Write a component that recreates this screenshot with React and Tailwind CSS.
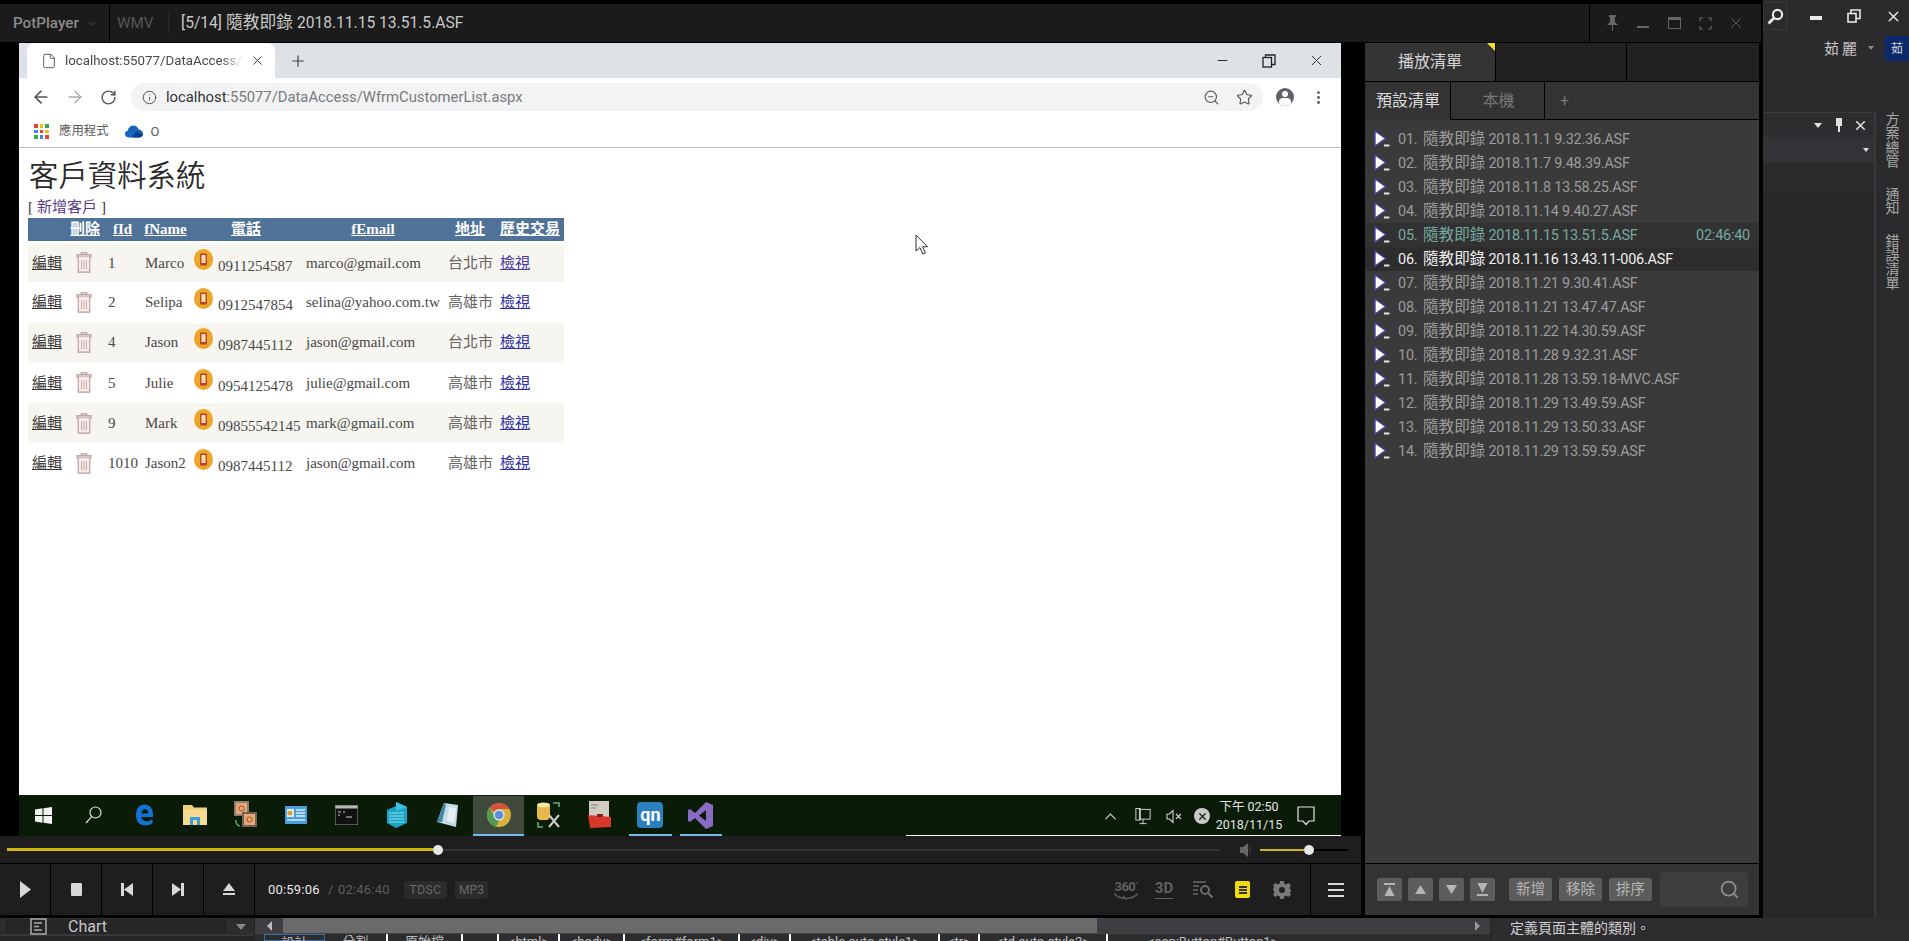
import React from "react";
import { ArrowLeft, ArrowRight, RotateCw, Info, Star, MoreVertical, X, Plus, File, Minus, ChevronDown, ChevronUp, Search, ZoomOut } from "lucide-react";

const customers = [
  ["1", "Marco", "0911254587", "marco@gmail.com", "台北市"],
  ["2", "Selipa", "0912547854", "selina@yahoo.com.tw", "高雄市"],
  ["4", "Jason", "0987445112", "jason@gmail.com", "台北市"],
  ["5", "Julie", "0954125478", "julie@gmail.com", "高雄市"],
  ["9", "Mark", "09855542145", "mark@gmail.com", "高雄市"],
  ["1010", "Jason2", "0987445112", "jason@gmail.com", "高雄市"],
];

const playlist = [
  ["01.", "2018.11.1 9.32.36.ASF"],
  ["02.", "2018.11.7 9.48.39.ASF"],
  ["03.", "2018.11.8 13.58.25.ASF"],
  ["04.", "2018.11.14 9.40.27.ASF"],
  ["05.", "2018.11.15 13.51.5.ASF"],
  ["06.", "2018.11.16 13.43.11-006.ASF"],
  ["07.", "2018.11.21 9.30.41.ASF"],
  ["08.", "2018.11.21 13.47.47.ASF"],
  ["09.", "2018.11.22 14.30.59.ASF"],
  ["10.", "2018.11.28 9.32.31.ASF"],
  ["11.", "2018.11.28 13.59.18-MVC.ASF"],
  ["12.", "2018.11.29 13.49.59.ASF"],
  ["13.", "2018.11.29 13.50.33.ASF"],
  ["14.", "2018.11.29 13.59.59.ASF"],
];

function TrashIcon() {
  return (
    <svg width="16" height="21" viewBox="0 0 17 23" fill="none" stroke="#b89a98" strokeWidth="1.2">
      <path d="M5.5 3V1h6v2" />
      <rect x="0.8" y="3" width="15.4" height="2.6" fill="#e8dcda" />
      <path d="M2.2 5.6V22h12.6V5.6" fill="#f6eeec" />
      <path d="M5.8 9v10M8.5 9v10M11.2 9v10" stroke="#cfaeab" />
    </svg>
  );
}

function PhoneIcon() {
  return (
    <svg width="19" height="21" viewBox="0 0 19 21">
      <ellipse cx="9.5" cy="10.5" rx="9.5" ry="10.5" fill="#eda52a" />
      <rect x="6" y="4.5" width="7" height="12" rx="1" fill="#b5452a" />
      <rect x="7.4" y="6" width="4.2" height="8" fill="#f2d9b0" />
    </svg>
  );
}

function PlayItemIcon() {
  return (
    <svg width="16" height="18" viewBox="0 0 16 18">
      <path d="M1 1L11.5 8.5L1 16Z" fill="#ffffff" stroke="#4a46a8" strokeWidth="1.4" />
      <rect x="10" y="14.5" width="5.5" height="2" fill="#e0e0e0" />
    </svg>
  );
}

function AppsGrid() {
  const colors = ["#ea4335", "#fbbc05", "#34a853", "#4285f4", "#ea4335", "#fbbc05", "#34a853", "#4285f4", "#ea4335"];
  return (
    <div className="grid grid-cols-3 gap-[2px] w-[15px] h-[15px]">
      {colors.map((c, i) => (
        <div key={i} className="w-[3.6px] h-[3.6px]" style={{ backgroundColor: c }} />
      ))}
    </div>
  );
}

function ChromeLogo() {
  return (
    <svg width="24" height="24" viewBox="0 0 24 24">
      <circle cx="12" cy="12" r="12" fill="#d8b13a" />
      <path d="M12 0A12 12 0 0 1 22.4 6H12A6 6 0 0 0 6.8 9L2.6 4.6A12 12 0 0 1 12 0Z" fill="#d5513f" />
      <path d="M2.6 4.6L7.8 14A6 6 0 0 0 12 18L9 23.6A12 12 0 0 1 2.6 4.6Z" fill="#4f9a55" />
      <circle cx="12" cy="12" r="5.6" fill="#e6e6e6" />
      <circle cx="12" cy="12" r="4.3" fill="#5b8fe0" />
    </svg>
  );
}

function TaskIcon({ children, active, under }) {
  return (
    <div className={active ? "w-[50.6px] h-full flex flex-col bg-[#3f4a3c] shrink-0" : "w-[50.6px] h-full flex flex-col shrink-0"}>
      <div className="flex-1 flex items-center justify-center">{children}</div>
      <div className={under ? "h-[2px] mx-[4px] bg-[#76b9ed]" : active ? "h-[2px] bg-[#76b9ed]" : "h-[2px]"} />
    </div>
  );
}

function Taskbar() {
  return (
    <div className="h-[41px] bg-[#0a1c08] flex items-stretch relative border-t border-[#0c240a]">
      <div className="flex -ml-[1px] h-full">
        <TaskIcon>
          <svg width="17" height="17" viewBox="0 0 17 17" fill="#f2f2f2"><path d="M0 2.5L7.5 1.3V8H0ZM8.5 1.2L17 0V8H8.5ZM0 9H7.5V15.7L0 14.5ZM8.5 9H17V17L8.5 15.8Z" /></svg>
        </TaskIcon>
        <TaskIcon>
          <svg width="17" height="18" viewBox="0 0 17 18" fill="none" stroke="#e0e0e0" strokeWidth="1.2"><circle cx="10.5" cy="6.5" r="5.5" /><path d="M6.5 10.8L1 17" /></svg>
        </TaskIcon>
        <TaskIcon>
          <svg width="21" height="24" viewBox="0 0 21 24" fill="none"><path d="M19 11.5C19 5 15.5 1.5 10.5 1.5C5 1.5 2 6.5 2 12C2 18.5 6 22.5 11.5 22.5C14.5 22.5 17 21.5 18.5 20V16C16.5 17.5 14.5 18.3 12.5 18.3C9.5 18.3 7.5 16.5 7.3 14H19ZM7.4 10.5C7.7 8 9 6.3 11 6.3C13 6.3 14.2 8 14.3 10.5Z" fill="#1173d4" fillRule="evenodd" /></svg>
        </TaskIcon>
        <TaskIcon>
          <svg width="24" height="22" viewBox="0 0 24 22"><path d="M0 1H9L11 3.5H24V21H0Z" fill="#f0cf7a" /><rect x="0" y="6" width="24" height="15" fill="#f5da90" /><path d="M7 13H17V21H14V16H10V21H7Z" fill="#3a9ed8" /></svg>
        </TaskIcon>
        <TaskIcon>
          <svg width="25" height="28" viewBox="0 0 25 28"><rect x="1" y="0" width="15" height="15" fill="#8b8070" /><rect x="3" y="2" width="11" height="11" fill="#e5a773" /><circle cx="8.5" cy="7.5" r="2.6" fill="none" stroke="#b44a20" /><rect x="9" y="11" width="15" height="15" fill="#6d6457" /><rect x="11" y="13" width="11" height="11" fill="#e5a773" /><circle cx="16.5" cy="18.5" r="2.6" fill="none" stroke="#b44a20" /><path d="M3 19A5 5 0 0 0 7 25" fill="none" stroke="#4caf50" strokeWidth="1.6" /></svg>
        </TaskIcon>
        <TaskIcon>
          <svg width="22" height="18" viewBox="0 0 22 18"><rect width="22" height="18" fill="#4a9ee0" /><rect x="2" y="3" width="7" height="8" fill="#e8f0f5" /><circle cx="5" cy="7" r="2.5" fill="#e09a30" /><path d="M11 4H20M11 7H20M11 10H20M2 14H20" stroke="#d6ecfa" strokeWidth="1.4" /></svg>
        </TaskIcon>
        <TaskIcon>
          <svg width="23" height="20" viewBox="0 0 23 20"><rect width="23" height="20" fill="#111" stroke="#999" /><rect x="0.5" y="0.5" width="22" height="3" fill="#b5b5b5" /><path d="M3 7H6M8 7H10M3 10H5M11 12H17" stroke="#d0d0d0" strokeWidth="1.2" /></svg>
        </TaskIcon>
        <TaskIcon>
          <svg width="20" height="26" viewBox="0 0 20 26"><path d="M9 0L20 5V21L9 26L0 21V8L9 4Z" fill="#18a4c9" /><path d="M2 11H17M2 14H17M2 17H17M2 20H17" stroke="#a5e4f2" strokeWidth="0.9" /><path d="M9 0L20 5L9 9Z" fill="#3bc4e4" /></svg>
        </TaskIcon>
        <TaskIcon>
          <svg width="22" height="26" viewBox="0 0 22 26"><path d="M7 1L21 3L19 25L0 20Z" fill="#c3dce6" /><path d="M7 1L9 3L5 20L0 20Z" fill="#3f88a6" /><path d="M12 5L19 6L17 21L10 19Z" fill="#e7f1f5" /></svg>
        </TaskIcon>
        <TaskIcon active>
          <ChromeLogo />
        </TaskIcon>
        <TaskIcon>
          <svg width="26" height="28" viewBox="0 0 26 28"><rect x="1" y="2" width="13" height="17" rx="4" fill="#e7b84a" /><ellipse cx="7.5" cy="4" rx="6.5" ry="2.4" fill="#f5e6a8" /><path d="M17 2H23V6M2 21V26H7" fill="none" stroke="#5db075" strokeWidth="1.6" /><path d="M13 26L23 14M23 26L13 14" stroke="#ccc" strokeWidth="2" /></svg>
        </TaskIcon>
        <TaskIcon>
          <svg width="23" height="28" viewBox="0 0 23 28"><rect x="1" y="0" width="20" height="18" fill="#d0cbc4" /><path d="M3 4H10M3 7H8" stroke="#88807a" /><path d="M0 14L23 16V26L2 27Z" fill="#d8382c" /><rect x="9" y="13" width="6" height="3" fill="#8b1f15" /></svg>
        </TaskIcon>
        <TaskIcon under>
          <div className="w-[26px] h-[26px] rounded-[4px] bg-[#2a7fc0] flex items-center justify-center text-white font-bold text-[18px] leading-none font-['Roboto',sans-serif]">qn</div>
        </TaskIcon>
        <TaskIcon under>
          <svg width="26" height="27" viewBox="0 0 26 27"><path d="M18 0L25 3V24L18 27L7 16L2 20L0 19V8L2 7L7 11ZM18 8L11 13.5L18 19Z" fill="#8a6bc4" fillRule="evenodd" /></svg>
        </TaskIcon>
      </div>
      <div className="ml-auto flex items-center h-full text-[#dcdcdc]">
        <ChevronUp size={19} strokeWidth={1.3} className="mr-[15px]" />
        <svg width="16" height="19" viewBox="0 0 18 20" fill="none" stroke="#cfcfcf" strokeWidth="1.1" className="mr-[15px]"><rect x="5" y="2" width="12" height="11" /><rect x="1" y="1" width="5" height="13" /><path d="M9 13V18M5 18H13" /></svg>
        <svg width="16" height="15" viewBox="0 0 16 15" fill="none" stroke="#cfcfcf" strokeWidth="1.1" className="mr-[12px]"><path d="M1 5H3.5L7 1.5V13.5L3.5 10H1Z" /><path d="M10 5L15 10M15 5L10 10" /></svg>
        <div className="w-[16px] h-[16px] rounded-full bg-[#c9c9c9] flex items-center justify-center mr-[6px]"><X size={11} strokeWidth={3} className="text-[#222]" /></div>
        <div className="w-[66px] flex flex-col items-center text-[12.5px] leading-[18px] text-[#e4e4e4] font-['Roboto','Noto_Sans_CJK_TC',sans-serif]">
          <span>下午 02:50</span>
          <span>2018/11/15</span>
        </div>
        <svg width="18" height="20" viewBox="0 0 18 20" fill="none" stroke="#e4e4e4" strokeWidth="1.2" className="ml-[15px] mr-[26px]"><path d="M1 1H17V15H12L9 18.5L6 15H1Z" /></svg>
      </div>
      <div className="absolute right-0 bottom-0 w-[435px] h-[1px] bg-white" />
    </div>
  );
}

function ChromeWindow() {
  return (
    <div className="w-[1322px] h-[752px] bg-white flex flex-col relative overflow-hidden font-['Roboto','Noto_Sans_CJK_TC',sans-serif]">
      <div className="h-[35px] bg-[#dee1e6] flex items-end shrink-0">
        <div className="ml-[8px] w-[248px] h-[35px] bg-white rounded-t-[8px] flex items-center pl-[14px] pr-[10px]">
          <File size={16} strokeWidth={1.4} className="text-[#555] shrink-0" />
          <div className="ml-[8px] w-[178px] overflow-hidden whitespace-nowrap text-[13.3px] text-[#4a4a4a] [mask-image:linear-gradient(to_right,black_88%,transparent)]">localhost:55077/DataAccess/WfrmCustomerList.aspx</div>
          <X size={15} strokeWidth={1.6} className="ml-auto text-[#444]" />
        </div>
        <div className="self-center ml-[14px] text-[#444]"><Plus size={18} strokeWidth={1.6} /></div>
        <div className="ml-auto self-center flex items-center text-[#222] pr-[16px] gap-[32px]">
          <Minus size={15} strokeWidth={1.5} />
          <svg width="14" height="14" viewBox="0 0 14 14" fill="none" stroke="#222" strokeWidth="1.3"><rect x="1" y="3.5" width="8.5" height="9.5" /><path d="M3.5 3.5V1H13V10.5H9.5" /></svg>
          <X size={17} strokeWidth={1.3} />
        </div>
      </div>
      <div className="h-[38px] flex items-center pl-[12px] pr-[13px] shrink-0">
        <ArrowLeft size={20} strokeWidth={2} className="text-[#555] shrink-0" />
        <ArrowRight size={20} strokeWidth={1.6} className="text-[#aaa] ml-[14px] shrink-0" />
        <RotateCw size={17} strokeWidth={2} className="text-[#555] ml-[15px] shrink-0" />
        <div className="ml-[14px] w-[1132px] h-[28px] rounded-full bg-[#f1f3f4] flex items-center pl-[11px] pr-[10px] shrink-0">
          <Info size={15} strokeWidth={1.6} className="text-[#555]" />
          <div className="ml-[9px] text-[14.8px] whitespace-nowrap text-[#7a7a7a]"><span className="text-[#333]">localhost</span>:55077/DataAccess/WfrmCustomerList.aspx</div>
          <ZoomOut size={17} strokeWidth={1.6} className="ml-auto text-[#555]" />
          <Star size={17} strokeWidth={1.6} className="ml-[16px] text-[#555]" />
        </div>
        <div className="ml-[13px] w-[18px] h-[18px] rounded-full bg-[#5f6368] relative overflow-hidden shrink-0">
          <div className="absolute left-[6px] top-[3px] w-[6px] h-[6px] rounded-full bg-white" />
          <div className="absolute left-[3px] top-[10px] w-[12px] h-[8px] rounded-full bg-white" />
        </div>
        <MoreVertical size={17} strokeWidth={2} className="ml-[16px] text-[#555] shrink-0" />
      </div>
      <div className="h-[32px] border-b border-[#bdbdbd] flex items-center pl-[15px] shrink-0">
        <AppsGrid />
        <span className="ml-[10px] text-[12.4px] text-[#5c5c5c]">應用程式</span>
        <svg width="18" height="13" viewBox="0 0 18 13" className="ml-[16px]"><path d="M4 12.5C1.5 12.5 0 11 0 9C0 7.3 1 6 2.7 5.8C3.3 2.5 5.6 0.5 8.5 0.5C10.8 0.5 12.7 1.9 13.5 4.2C15.8 4.4 18 6.2 18 8.7C18 11 16 12.5 14 12.5Z" fill="#1565c0" /><path d="M7 12.5L11.5 6L18 9.5C17.5 11.5 16 12.5 14 12.5Z" fill="#0a3f8f" /></svg>
        <span className="ml-[8px] text-[13px] text-[#5c5c5c]">O</span>
      </div>
      <div className="flex-1 flex flex-col pl-[9px] pt-[6px] font-['Liberation_Serif','Noto_Sans_CJK_TC',serif]">
        <h1 className="text-[29.4px] leading-[38px] text-[#2a2a2a] font-['Noto_Sans_CJK_TC',sans-serif] [font-weight:350] ml-[1px]">客戶資料系統</h1>
        <div className="h-[21px] mt-[5px] flex items-center text-[15px] text-[#333]">[ <a className="mx-[4px] text-[#5a3a8c]">新增客戶</a> ]</div>
        <table className="table-fixed w-[536px] border-collapse text-[15px] text-[#484848]">
          <colgroup>
            <col className="w-[38px]" /><col className="w-[38px]" /><col className="w-[37px]" /><col className="w-[49px]" /><col className="w-[112px]" /><col className="w-[142px]" /><col className="w-[52px]" /><col className="w-[68px]" />
          </colgroup>
          <thead>
            <tr className="h-[24px] bg-[#507299] text-white font-bold underline text-center">
              <th></th><th>刪除</th><th>fId</th><th>fName</th><th>電話</th><th>fEmail</th><th>地址</th><th className="whitespace-nowrap">歷史交易</th>
            </tr>
          </thead>
          <tbody>
            {customers.map((c, i) => (
              <tr key={c[0]} className={i % 2 === 0 ? "h-[40.25px] bg-[#f6f5ef]" : "h-[40.25px] bg-white"}>
                <td className={i === 0 ? "pl-[4px] underline text-[#3a3a3a] border-t-[3px] border-white" : "pl-[4px] underline text-[#3a3a3a]"}>編輯</td>
                <td className={i === 0 ? "pl-[10px] border-t-[3px] border-white" : "pl-[10px]"}><TrashIcon /></td>
                <td className={i === 0 ? "pl-[4px] border-t-[3px] border-white" : "pl-[4px]"}>{c[0]}</td>
                <td className={i === 0 ? "pl-[4px] border-t-[3px] border-white" : "pl-[4px]"}>{c[1]}</td>
                <td className={i === 0 ? "pl-[4px] whitespace-nowrap border-t-[3px] border-white" : "pl-[4px] whitespace-nowrap"}>
                  <div className="flex items-start">
                    <PhoneIcon />
                    <span className="ml-[5px] mt-[6px]">{c[2]}</span>
                  </div>
                </td>
                <td className={i === 0 ? "pl-[4px] whitespace-nowrap border-t-[3px] border-white" : "pl-[4px] whitespace-nowrap"}>{c[3]}</td>
                <td className={i === 0 ? "pl-[4px] whitespace-nowrap text-[#666] border-t-[3px] border-white" : "pl-[4px] whitespace-nowrap text-[#666]"}>{c[4]}</td>
                <td className={i === 0 ? "pl-[4px] underline text-[#4b3a9c] border-t-[3px] border-white" : "pl-[4px] underline text-[#2f2fa8]"}>檢視</td>
              </tr>
            ))}
          </tbody>
        </table>
      </div>
      <svg width="14" height="22" viewBox="0 0 14 22" className="absolute left-[896px] top-[191px]" fill="#fff" stroke="#333" strokeWidth="1"><path d="M1 1V17L5 13.5L7.8 20L10.5 19L7.6 12.8H12.5Z" /></svg>
    </div>
  );
}

function CtrlCell({ children }) {
  return <div className="w-[51px] h-full border-r border-black flex items-center justify-center shrink-0">{children}</div>;
}

function SmallSquareBtn({ children }) {
  return <div className="w-[25px] h-[23px] rounded-[2px] bg-[#5c5c5c] flex items-center justify-center">{children}</div>;
}

function TextBtn({ children }) {
  return <div className="w-[43px] h-[23px] rounded-[2px] bg-[#5c5c5c] flex items-center justify-center text-[14.5px] text-[#b5b5b5]">{children}</div>;
}

function Playlist() {
  return (
    <div className="w-[394px] h-full flex flex-col bg-[#3a3a3a] font-['Roboto','Noto_Sans_CJK_TC',sans-serif] shrink-0">
      <div className="h-[39px] flex bg-[#212121] border-b border-black shrink-0">
        <div className="w-[130px] bg-[#343434] relative flex items-center pl-[33px] text-[16px] text-[#d4d4d4]">
          播放清單
          <div className="absolute right-0 top-0 w-0 h-0 border-t-[8px] border-t-[#f5e027] border-l-[8px] border-l-transparent" />
        </div>
        <div className="w-[1px] bg-black" />
        <div className="w-[131px] border-r border-black" />
      </div>
      <div className="h-[38px] flex bg-[#333333] shrink-0">
        <div className="w-[86px] border-r border-black flex items-center pl-[11px] text-[16px] text-[#dcdcdc]">預設清單</div>
        <div className="w-[94px] border-r border-b border-black flex items-center justify-center text-[16px] text-[#777] pl-[2px]">本機</div>
        <div className="flex-1 border-b border-black flex items-center pl-[15px] text-[16px] text-[#777]">+</div>
      </div>
      <div className="flex-1 pt-[7px]">
        {playlist.map((p, i) => (
          <div
            key={p[0]}
            className={
              i === 4
                ? "h-[24px] flex items-center pl-[9px] pr-[9px] bg-[#323232] text-[#76a8a2]"
                : i === 5
                ? "h-[24px] flex items-center pl-[9px] pr-[9px] bg-[#2d2d2d] text-[#efefef]"
                : "h-[24px] flex items-center pl-[9px] pr-[9px] text-[#9c9c9c]"
            }
          >
            <PlayItemIcon />
            <span className="ml-[8px] mt-[2px] text-[14.4px] tracking-[-0.2px] whitespace-nowrap w-[24px]">{p[0]}</span>
            <span className="mt-[2px] text-[15.6px] whitespace-nowrap ml-[1px]">隨教即錄</span>
            <span className="ml-[3px] mt-[2px] text-[14.4px] tracking-[-0.2px] whitespace-nowrap">{p[1]}</span>
            {i === 4 && <span className="ml-auto mt-[2px] text-[14.4px] tracking-[-0.2px]">02:46:40</span>}
          </div>
        ))}
      </div>
      <div className="h-[52px] bg-[#333333] border-t border-black flex items-center pl-[12px] shrink-0">
        <div className="flex gap-[6px]">
          <SmallSquareBtn><svg width="11" height="13" viewBox="0 0 11 13" fill="#b5b5b5"><rect y="0" width="11" height="2" /><path d="M5.5 3L10.5 13H0.5Z" /></svg></SmallSquareBtn>
          <SmallSquareBtn><svg width="11" height="9" viewBox="0 0 11 9" fill="#b5b5b5"><path d="M5.5 0L11 9H0Z" /></svg></SmallSquareBtn>
          <SmallSquareBtn><svg width="11" height="9" viewBox="0 0 11 9" fill="#b5b5b5"><path d="M0 0H11L5.5 9Z" /></svg></SmallSquareBtn>
          <SmallSquareBtn><svg width="11" height="13" viewBox="0 0 11 13" fill="#b5b5b5"><path d="M0.5 0H10.5L5.5 10Z" /><rect y="11" width="11" height="2" /></svg></SmallSquareBtn>
        </div>
        <div className="ml-[14px] flex gap-[7px]">
          <TextBtn>新增</TextBtn>
          <TextBtn>移除</TextBtn>
          <TextBtn>排序</TextBtn>
        </div>
        <div className="ml-[8px] w-[88px] h-[35px] rounded-[3px] bg-[#3d3d3d] flex items-center justify-end pr-[8px]">
          <Search size={21} strokeWidth={2} className="text-[#8d8d8d]" />
        </div>
      </div>
    </div>
  );
}

function PlayerLeft() {
  return (
    <div className="w-[1361px] h-full flex flex-col font-['Roboto','Noto_Sans_CJK_TC',sans-serif] shrink-0">
      <div className="flex-1 pl-[19px] flex flex-col bg-black">
        <ChromeWindow />
        <div className="w-[1322px]"><Taskbar /></div>
      </div>
      <div className="h-[27px] bg-[#1e1e1e] flex items-center pl-[7px] shrink-0">
        <div className="w-[426px] h-[3px] bg-[#d6b711]" />
        <div className="w-[10px] h-[10px] rounded-full bg-[#e8e8e8]" />
        <div className="w-[777px] h-[2px] bg-[#333]" />
        <svg width="14" height="14" viewBox="0 0 14 14" className="ml-[19px]" fill="#666"><path d="M1 4H4L9 0V14L4 10H1Z" /><path d="M11 3V11" stroke="#444" /></svg>
        <div className="ml-[7px] w-[44px] h-[2px] bg-[#d6b711]" />
        <div className="w-[10px] h-[10px] rounded-full bg-[#e8e8e8]" />
        <div className="w-[34px] h-[2px] bg-black" />
      </div>
      <div className="h-[52px] bg-[#1e1e1e] border-t border-black flex items-center shrink-0">
        <CtrlCell><svg width="11" height="17" viewBox="0 0 11 17" fill="#d8d8d8"><path d="M0 0L11 8.5L0 17Z" /></svg></CtrlCell>
        <CtrlCell><div className="w-[11px] h-[13px] rounded-[1px] bg-[#d8d8d8]" /></CtrlCell>
        <CtrlCell><svg width="12" height="13" viewBox="0 0 12 13" fill="#d8d8d8"><rect width="3" height="13" /><path d="M12 0V13L3 6.5Z" /></svg></CtrlCell>
        <CtrlCell><svg width="12" height="13" viewBox="0 0 12 13" fill="#d8d8d8"><rect x="9" width="3" height="13" /><path d="M0 0V13L9 6.5Z" /></svg></CtrlCell>
        <CtrlCell><svg width="12" height="13" viewBox="0 0 12 13" fill="#d8d8d8"><path d="M6 0L12 8H0Z" /><rect y="10" width="12" height="2" /></svg></CtrlCell>
        <span className="ml-[13px] w-[52px] text-[13px] tracking-[0.2px] text-[#e8e8e8] whitespace-nowrap">00:59:06</span>
        <span className="ml-[8px] w-[10px] text-[13px] text-[#5f5f5f]">/</span>
        <span className="w-[52px] text-[13px] tracking-[0.2px] text-[#5f5f5f] whitespace-nowrap">02:46:40</span>
        <div className="ml-[14px] w-[43px] h-[18px] bg-[#2b2b2b] rounded-[2px] flex items-center justify-center text-[12px] text-[#6a6a6a] tracking-[0.5px]">TDSC</div>
        <div className="ml-[8px] w-[33px] h-[18px] bg-[#2b2b2b] rounded-[2px] flex items-center justify-center text-[12px] text-[#6a6a6a]">MP3</div>
        <div className="ml-auto flex items-center h-full text-[#606060]">
          <div className="w-[26px] flex flex-col items-center leading-none">
            <span className="text-[13px] font-bold leading-[13px] tracking-[-0.5px]">360<sup className="text-[7px]">°</sup></span>
            <svg width="26" height="7" viewBox="0 0 26 7" fill="none" stroke="#606060" strokeWidth="1.2"><path d="M1 0.5C5 5 9 5.5 13 5.5C17 5.5 21 5 25 0.5" /><path d="M10 3L13 6.5" /></svg>
          </div>
          <div className="ml-[16px] w-[18px] flex flex-col items-center">
            <span className="text-[15px] font-bold leading-[16px]">3D</span>
            <div className="w-[18px] h-[1px] bg-[#606060] mt-[2px]" />
          </div>
          <svg width="22" height="17" viewBox="0 0 22 17" fill="none" stroke="#6b6b6b" strokeWidth="1.3" className="ml-[19px]"><path d="M1 1H14M1 5H7M1 9H6M1 13H6" /><circle cx="13" cy="9" r="4" strokeWidth="2" /><path d="M16 12L20.5 16.5" strokeWidth="2.2" /></svg>
          <div className="ml-[21px] w-[15px] h-[17px] rounded-[2px] bg-[#f1dc0b] flex flex-col items-center justify-center gap-[1px]">
            <div className="w-[8px] h-[2px] bg-[#333]" /><div className="w-[8px] h-[2px] bg-[#333]" /><div className="w-[8px] h-[2px] bg-[#333]" />
          </div>
          <svg width="18" height="18" viewBox="0 0 18 18" className="ml-[23px]" fill="#7a7a7a"><path d="M7.2 0H10.8L11.3 2.5L13.4 3.4L15.5 2L18 4.5L16.6 6.6L17.5 8.7L18 9V9.3L17.5 11.3L16.6 11.4L18 13.5L15.5 16L13.4 14.6L11.3 15.5L10.8 18H7.2L6.7 15.5L4.6 14.6L2.5 16L0 13.5L1.4 11.4L0.5 9.3L0 9L0.5 6.7L1.4 6.6L0 4.5L2.5 2L4.6 3.4L6.7 2.5Z" /><circle cx="9" cy="9" r="3" fill="#1e1e1e" /></svg>
          <div className="ml-[19px] w-[51px] h-full border-l border-black flex items-center justify-center">
            <div className="w-[16px] flex flex-col gap-[4px]"><div className="h-[2px] bg-[#d8d8d8]" /><div className="h-[2px] bg-[#d8d8d8]" /><div className="h-[2px] bg-[#d8d8d8]" /></div>
          </div>
        </div>
      </div>
    </div>
  );
}

function TitleBar() {
  return (
    <div className="h-[38px] bg-[#1b1b1b] flex items-center font-['Roboto','Noto_Sans_CJK_TC',sans-serif] shrink-0 w-[1761px]">
      <div className="w-[110px] h-full border-r border-black flex items-center pl-[13px] text-[15.2px] font-medium text-[#8a8a8a] shrink-0">
        PotPlayer
        <ChevronDown size={11} strokeWidth={1.5} className="ml-[8px] text-[#666]" />
      </div>
      <span className="ml-[7px] w-[52px] text-[15.2px] text-[#565656] border-r border-[#2a2a2a]">WMV</span>
      <div className="ml-[12px] whitespace-nowrap text-[#c8c8c8] text-[15.6px]">[5/14] <span className="text-[16.8px]">隨教即錄</span> 2018.11.15 13.51.5.ASF</div>
      <div className="ml-auto w-[172px] h-full border-l border-black flex items-center text-[#5f5f5f]">
        <svg width="13" height="16" viewBox="0 0 13 16" fill="#666" className="ml-[16px]"><path d="M3 0H10V2H9V7L12 10H1L4 7V2H3ZM6 10H7V16H6Z" /></svg>
        <div className="ml-[18px] w-[12px] h-[2px] mt-[8px] bg-[#666]" />
        <div className="ml-[19px] w-[13px] h-[12px] border border-[#666] border-t-[3px]" />
        <svg width="13" height="13" viewBox="0 0 13 13" fill="none" stroke="#666" strokeWidth="1.2" className="ml-[18px]"><path d="M1 4V1H4M9 1H12V4M12 9V12H9M4 12H1V9" /></svg>
        <X size={18} strokeWidth={1.1} className="ml-[15px] text-[#6a6a6a]" />
      </div>
    </div>
  );
}

function IdeRight() {
  return (
    <div className="w-[146px] h-full bg-[#2b2b2e] flex flex-col font-['Noto_Sans_CJK_TC',sans-serif] shrink-0">
      <div className="h-[32px] flex items-center shrink-0">
        <div className="w-[24px] h-[28px] border border-[#3a3a3e] flex items-center justify-center">
          <svg width="17" height="17" viewBox="0 0 17 17" fill="none" stroke="#e8e8e8" strokeWidth="2.2"><circle cx="10.5" cy="6.5" r="4.6" /><path d="M7 10L1.5 15.5" strokeWidth="2.8" /></svg>
        </div>
        <div className="ml-[23px] w-[12px] h-[4px] bg-[#e8e8e8] mt-[4px]" />
        <svg width="14" height="14" viewBox="0 0 14 14" fill="none" stroke="#e8e8e8" strokeWidth="1.6" className="ml-[25px]"><rect x="1" y="4.5" width="8" height="8.5" /><path d="M4 4.5V1H13V9.5H9" /></svg>
        <X size={17} strokeWidth={2} className="ml-[24px] text-[#e8e8e8]" />
      </div>
      <div className="h-[32px] flex items-center justify-end shrink-0">
        <span className="text-[15px] tracking-[3px] text-[#c4c4c4]">茹麗</span>
        <div className="ml-[8px] w-0 h-0 border-l-[3px] border-r-[3px] border-t-[4px] border-l-transparent border-r-transparent border-t-[#888]" />
        <div className="ml-[11px] w-[24px] h-[25px] bg-[#0b2a6b] text-[12px] text-[#d6d6d6] flex items-center justify-center">茹</div>
      </div>
      <div className="flex flex-1 mt-[48px] min-h-0">
        <div className="w-[113px] flex flex-col border-t border-r-2 border-[#3a3a3e]">
          <div className="h-[24px] bg-[#2d2d30] flex items-center justify-end pr-[6px] text-[#dcdcdc] shrink-0">
            <div className="w-0 h-0 border-l-[4px] border-r-[4px] border-t-[5px] border-l-transparent border-r-transparent border-t-[#e0e0e0]" />
            <svg width="8" height="14" viewBox="0 0 8 14" fill="#e0e0e0" className="ml-[13px]"><path d="M1 0H7V8H5V14H3V8H1Z" /></svg>
            <X size={15} strokeWidth={2.6} className="ml-[10px]" />
          </div>
          <div className="h-[26px] bg-[#333337] flex items-center justify-end pr-[5px] shrink-0">
            <div className="w-0 h-0 border-l-[3px] border-r-[3px] border-t-[4px] border-l-transparent border-r-transparent border-t-[#ddd]" />
          </div>
          <div className="h-[30px] bg-[#2b2b2e] shrink-0" />
          <div className="flex-1 bg-[#28282b]" />
        </div>
        <div className="flex-1 flex flex-col items-center text-[14px] text-[#a8a8a8] leading-[14px]">
          <span className="[writing-mode:vertical-rl]">方案總管</span>
          <span className="[writing-mode:vertical-rl] mt-[19px]">通知</span>
          <span className="[writing-mode:vertical-rl] mt-[19px]">錯誤清單</span>
        </div>
      </div>
    </div>
  );
}

export default function App() {
  return (
    <div className="w-[1909px] h-[941px] overflow-hidden flex flex-col bg-[#2d2d30]">
      <div className="h-[918px] flex shrink-0">
        <div className="w-[1763px] h-full bg-black flex flex-col pt-[4px] pb-[3px] shrink-0">
          <TitleBar />
          <div className="flex flex-1 mt-[1px] min-h-0">
            <PlayerLeft />
            <div className="w-[4px] shrink-0" />
            <Playlist />
          </div>
        </div>
        <IdeRight />
      </div>
      <div className="h-[23px] flex font-['Roboto','Noto_Sans_CJK_TC',sans-serif] shrink-0">
        <div className="w-[255px] flex flex-col border-r border-[#222] shrink-0">
          <div className="h-[17px] flex items-center bg-[#2d2d30] overflow-hidden">
            <div className="ml-[4px] w-[224px] h-[17px] bg-[#252526] border border-[#333] flex items-center pl-[25px]">
              <svg width="17" height="17" viewBox="0 0 17 17" fill="none" stroke="#aaa" strokeWidth="1.5"><rect x="1" y="1" width="15" height="15" /><path d="M4 5H12M4 8.5H9M4 12H12" /></svg>
              <span className="ml-[21px] text-[16px] text-[#c6c6c6]">Chart</span>
            </div>
            <div className="ml-[8px] w-0 h-0 border-l-[5px] border-r-[5px] border-t-[6px] border-l-transparent border-r-transparent border-t-[#888]" />
          </div>
          <div className="h-[6px] bg-[#252526] overflow-hidden border-t border-[#3a3a3e]" />
        </div>
        <div className="w-[1235px] flex flex-col shrink-0">
          <div className="h-[15px] bg-[#3e3e42] flex items-center shrink-0">
            <div className="ml-[12px] w-0 h-0 border-t-[5px] border-b-[5px] border-r-[5px] border-t-transparent border-b-transparent border-r-[#bbb]" />
            <div className="ml-[11px] w-[814px] h-full bg-[#6a6a6a]" />
            <div className="ml-auto mr-[10px] w-0 h-0 border-t-[5px] border-b-[5px] border-l-[5px] border-t-transparent border-b-transparent border-l-[#999]" />
          </div>
          <div className="h-[8px] bg-[#2d2d30] overflow-hidden border-t border-[#444] flex text-[13px] leading-[15px] text-[#bbb] whitespace-nowrap text-center">
            <span className="ml-[9px] w-[61px] border border-[#3a6ea5]">設計</span>
            <span className="w-[63px] border-r-2 border-white">分割</span>
            <span className="w-[75px] border-r-2 border-white">原始檔</span>
            <span className="ml-[34px] w-[63px] border-x-2 border-white">&lt;html&gt;</span>
            <span className="w-[65px] border-r-2 border-white">&lt;body&gt;</span>
            <span className="w-[115px] border-r-2 border-white">&lt;form#form1&gt;</span>
            <span className="w-[51px] border-r-2 border-white">&lt;div&gt;</span>
            <span className="w-[149px] border-r-2 border-white">&lt;table.auto-style1&gt;</span>
            <span className="w-[40px] border-r-2 border-white">&lt;tr&gt;</span>
            <span className="w-[128px] border-r-2 border-white">&lt;td.auto-style2&gt;</span>
            <span className="ml-[40px]">&lt;asp:Button#Button1&gt;</span>
          </div>
        </div>
        <div className="flex-1 bg-[#2d2d30] flex items-center pl-[19px] pb-[5px] border-l border-[#222] text-[14px] text-[#d0d0d0] whitespace-nowrap font-['Noto_Sans_CJK_TC',sans-serif]">定義頁面主體的類別。</div>
      </div>
    </div>
  );
}
